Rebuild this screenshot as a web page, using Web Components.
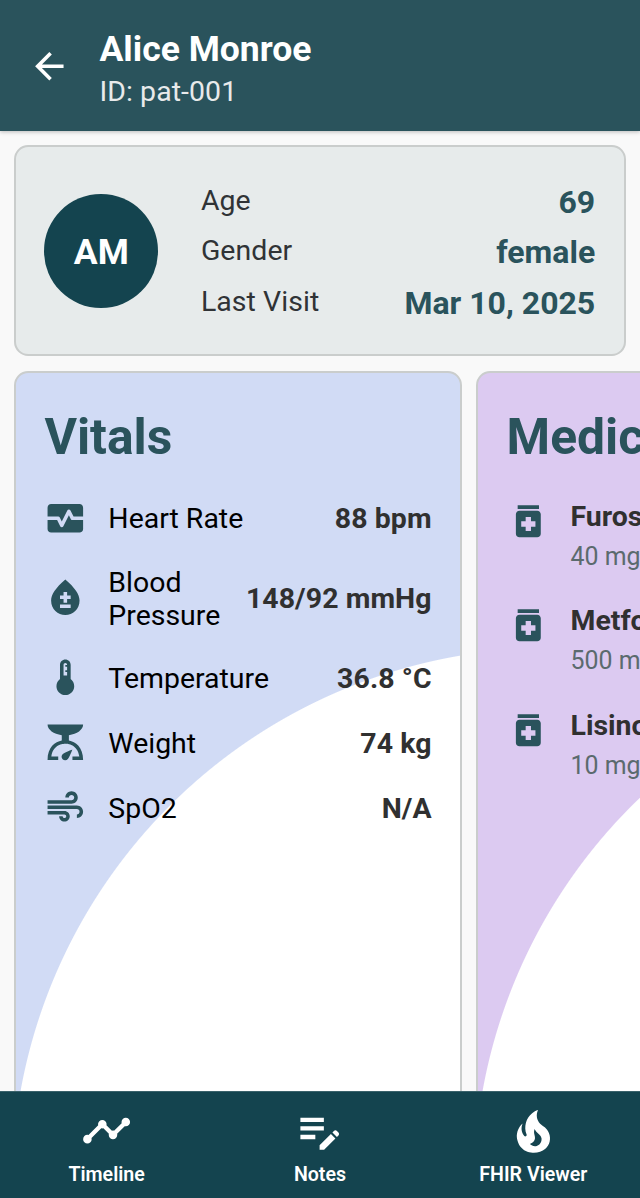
<!DOCTYPE html>
<html lang="en">
<head>
  <meta charset="utf-8">
  <meta name="viewport" content="width=device-width, initial-scale=1">
  <title>Alice Monroe</title>
  <style>
    html, body {
      height: 100%;
      margin: 0;
    }
    body {
      overflow: hidden;
      background: #f9f9f9;
      font-family: Roboto, sans-serif;
    }
  </style>
</head>
<body>
  <patient-screen>
    <app-header slot="header" heading="Alice Monroe">ID: pat-001</app-header>

    <patient-card initials="AM">
      <patient-fact label="Age">69</patient-fact>
      <patient-fact label="Gender">female</patient-fact>
      <patient-fact label="Last Visit">Mar 10, 2025</patient-fact>
    </patient-card>

    <card-carousel>
      <info-card heading="Vitals" style="--card-color: #d1dbf5">
        <vital-row icon="heart" label="Heart Rate">88 bpm</vital-row>
        <vital-row icon="blood" label="Blood Pressure">148/92 mmHg</vital-row>
        <vital-row icon="thermometer" label="Temperature">36.8 °C</vital-row>
        <vital-row icon="scale" label="Weight">74 kg</vital-row>
        <vital-row icon="air" label="SpO2">N/A</vital-row>
      </info-card>
      <info-card heading="Medications" style="--card-color: #dccaf1">
        <medication-row name="Furosemide">40 mg</medication-row>
        <medication-row name="Metformin">500 mg</medication-row>
        <medication-row name="Lisinopril">10 mg</medication-row>
      </info-card>
    </card-carousel>

    <nav-bar slot="footer">
      <nav-item icon="timeline">Timeline</nav-item>
      <nav-item icon="notes">Notes</nav-item>
      <nav-item icon="fire" size="56.9">FHIR Viewer</nav-item>
    </nav-bar>
  </patient-screen>

  <script>
    (function() {
      const icons = {
        back: 'M20 11H7.83l5.59-5.59L12 4l-8 8 8 8 1.41-1.41L7.83 13H20v-2z',
        heart: 'M15.11 12.45L14 10.24l-3.11 6.21c-.16.34-.51.55-.89.55s-.73-.21-.89-.55L7.38 13H2v5c0 1.1.9 2 2 2h16c1.1 0 2-.9 2-2v-5h-6c-.38 0-.73-.21-.89-.55zM20 4H4c-1.1 0-2 .9-2 2v5h6c.38 0 .73.21.89.55L10 13.76l3.11-6.21c.34-.68 1.45-.68 1.79 0L16.62 11H22V6c0-1.1-.9-2-2-2z',
        blood: 'M12 2c-5.33 4.55-8 8.48-8 11.8 0 4.98 3.8 8.2 8 8.2s8-3.22 8-8.2c0-3.32-2.67-7.25-8-11.8zm3 16H9v-2h6v2zm0-5h-2v2h-2v-2H9v-2h2V9h2v2h2v2z',
        thermometer: 'M15 13V5c0-1.66-1.34-3-3-3S9 3.34 9 5v8c-1.21.91-2 2.37-2 4 0 2.76 2.24 5 5 5s5-2.24 5-5c0-1.63-.79-3.09-2-4zm-4-8c0-.55.45-1 1-1s1 .45 1 1h-1v1h1v2h-1v1h1v2h-2V5z',
        scale: 'M14 11V8c4.56-.58 8-3.1 8-6H2c0 2.9 3.44 5.42 8 6v3c-3.68.73-8 3.61-8 11h6v-2H4.13c.93-6.83 6.65-7.2 7.87-7.2s6.94.37 7.87 7.2H16v2h6c0-7.39-4.32-10.27-8-11zM10.59 18.59C11.39 17.79 16 16 16 16s-1.79 4.61-2.59 5.41A2 2 0 1 1 10.59 18.59z',
        air: 'M14.5 17c0 1.65-1.35 3-3 3s-3-1.35-3-3h2c0 .55.45 1 1 1s1-.45 1-1-.45-1-1-1H2v-2h9.5c1.65 0 3 1.35 3 3zM19 6.5C19 4.57 17.43 3 15.5 3S12 4.57 12 6.5h2c0-.83.67-1.5 1.5-1.5s1.5.67 1.5 1.5S16.33 8 15.5 8H2v2h13.5c1.93 0 3.5-1.57 3.5-3.5zm-.5 4.5H2v2h16.5c.83 0 1.5.67 1.5 1.5s-.67 1.5-1.5 1.5v2c1.93 0 3.5-1.57 3.5-3.5S20.43 11 18.5 11z',
        medication: 'M6 3h12v2H6zm11 3H7c-1.1 0-2 .9-2 2v11c0 1.1.9 2 2 2h10c1.1 0 2-.9 2-2V8c0-1.1-.9-2-2-2zm-1 9h-2.5v2.5h-3V15H8v-3h2.5V9.5h3V12H16v3z',
        timeline: 'M3,14L3.5,14.07L8.07,9.5C7.89,8.85 8.06,8.11 8.59,7.59C9.37,6.8 10.63,6.8 11.41,7.59C11.94,8.11 12.11,8.85 11.93,9.5L14.5,12.07L15,12C15.18,12 15.35,12 15.5,12.07L19.07,8.5C19,8.35 19,8.18 19,8A2,2 0 0,1 21,6A2,2 0 0,1 23,8A2,2 0 0,1 21,10C20.82,10 20.65,10 20.5,9.93L16.93,13.5C17,13.65 17,13.82 17,14A2,2 0 0,1 15,16A2,2 0 0,1 13,14L13.07,13.5L10.5,10.93C10.18,11 9.82,11 9.5,10.93L4.93,15.5L5,16A2,2 0 0,1 3,18A2,2 0 0,1 1,16A2,2 0 0,1 3,14Z',
        notes: 'M3 10h11v2H3v-2zm0-2h11V6H3v2zm0 8h7v-2H3v2zm15.01-3.13.71-.71c.39-.39 1.02-.39 1.41 0l.71.71c.39.39.39 1.02 0 1.41l-.71.71-2.12-2.12zm-.71.71-5.3 5.3V21h2.12l5.3-5.3-2.12-2.12z',
        fire: 'M17.66 11.2C17.43 10.9 17.15 10.64 16.89 10.38C16.22 9.78 15.46 9.35 14.82 8.72C13.33 7.26 13 4.85 13.95 3C13 3.23 12.17 3.75 11.46 4.32C8.87 6.4 7.85 10.07 9.07 13.22C9.11 13.32 9.15 13.42 9.15 13.55C9.15 13.77 9 13.97 8.8 14.05C8.57 14.15 8.33 14.09 8.14 13.93C8.08 13.88 8.04 13.83 8 13.76C6.87 12.33 6.69 10.28 7.45 8.64C5.78 10 4.87 12.3 5 14.47C5.06 14.97 5.12 15.47 5.29 15.97C5.43 16.57 5.7 17.17 6 17.7C7.08 19.43 8.95 20.67 10.96 20.92C13.1 21.19 15.39 20.8 17.03 19.32C18.86 17.66 19.5 15 18.56 12.72L18.43 12.46C18.22 12 17.66 11.2 17.66 11.2M14.5 17.5C14.22 17.74 13.76 18 13.4 18.1C12.28 18.5 11.16 17.94 10.5 17.28C11.69 17 12.4 16.12 12.61 15.23C12.78 14.43 12.46 13.77 12.33 13C12.21 12.26 12.23 11.63 12.5 10.94C12.69 11.32 12.89 11.7 13.13 12C13.9 13 15.11 13.44 15.37 14.8C15.41 14.94 15.43 15.08 15.43 15.23C15.46 16.05 15.1 16.95 14.5 17.5Z'
      };

      // Registers an element whose shadow root is filled by render(element)
      function define(name, render) {
        window.customElements.define(name, class extends HTMLElement {
          constructor() {
            super();
            this.attachShadow({mode: 'open'});
          }

          connectedCallback() {
            this.shadowRoot.innerHTML = render(this);
          }
        });
      }

      define('ui-icon', (el) => `
        <style>
          :host {
            display: block;
            flex: none;
            width: var(--icon-size, 42.67px);
            height: var(--icon-size, 42.67px);
          }
          svg {
            display: block;
            width: 100%;
            height: 100%;
            fill: currentColor;
          }
        </style>
        <svg viewBox="0 0 24 24"><path d="${icons[el.getAttribute('name')]}"/></svg>
      `);

      define('patient-screen', () => `
        <style>
          :host {
            display: flex;
            flex-direction: column;
            height: 100vh;
            overflow: hidden;
          }
          main {
            flex: 1;
            min-height: 0;
            display: flex;
            flex-direction: column;
            gap: 15px;
            padding: 14px 14px 0;
            overflow: hidden;
          }
        </style>
        <slot name="header"></slot>
        <main><slot></slot></main>
        <slot name="footer"></slot>
      `);

      define('app-header', (el) => `
        <style>
          :host {
            position: relative;
            display: flex;
            align-items: center;
            flex: none;
            box-sizing: border-box;
            height: 131px;
            padding: 9px 28.4px 0;
            gap: 28.4px;
            background: #2a535c;
            color: #fff;
            box-shadow: 0 1px 4px rgba(0, 0, 0, .25);
          }
          h1 {
            margin: 0;
            font-size: 35.56px;
            font-weight: 700;
            line-height: 42px;
          }
          p {
            margin: 1px 0 0;
            color: #e8eaeb;
            font-size: 28.44px;
            line-height: 42px;
            letter-spacing: .08px;
          }
          ui-icon {
            margin-top: -8px;
          }
        </style>
        <ui-icon name="back"></ui-icon>
        <div>
          <h1>${el.getAttribute('heading')}</h1>
          <p><slot></slot></p>
        </div>
      `);

      define('patient-card', (el) => `
        <style>
          :host {
            display: flex;
            align-items: center;
            flex: none;
            box-sizing: border-box;
            height: 211px;
            padding: 0 28.8px 0 28.4px;
            gap: 42.7px;
            border: 2px solid #cacdcc;
            border-radius: 14.2px;
            background: #e7ebeb;
          }
          .avatar {
            display: flex;
            align-items: center;
            justify-content: center;
            flex: none;
            box-sizing: border-box;
            width: 113.8px;
            height: 113.8px;
            margin-top: 1px;
            padding-top: 3px;
            border-radius: 50%;
            background: #14444f;
            color: #fff;
            font-size: 35.56px;
            font-weight: 700;
          }
          .facts {
            flex: 1;
            padding-top: 16px;
          }
        </style>
        <div class="avatar">${el.getAttribute('initials')}</div>
        <div class="facts"><slot></slot></div>
      `);

      define('patient-fact', (el) => `
        <style>
          :host {
            display: flex;
            justify-content: space-between;
            align-items: flex-start;
            height: 50.3px;
          }
          .label {
            color: #303336;
            font-size: 28.44px;
            line-height: 36px;
            letter-spacing: .08px;
          }
          .value {
            color: #2a535c;
            font-size: 32px;
            font-weight: 700;
            line-height: 38.7px;
          }
        </style>
        <span class="label">${el.getAttribute('label')}</span>
        <span class="value"><slot></slot></span>
      `);

      define('card-carousel', () => `
        <style>
          :host {
            display: flex;
            flex: 1;
            gap: 14.2px;
            margin-right: -14px;
            overflow: hidden;
          }
        </style>
        <slot></slot>
      `);

      // The white disc is clipped by the card's right and bottom edges
      define('info-card', (el) => `
        <style>
          :host {
            flex: none;
            box-sizing: border-box;
            width: 448px;
            height: 860px;
            padding: 38px 28.4px 0;
            border: 2px solid #cacdcc;
            border-radius: 14.2px;
            background: radial-gradient(circle at 536.6px 815.6px, #fff 538.1px, var(--card-color) 539.1px) border-box;
          }
          h2 {
            margin: 0 0 22.5px;
            color: #2a535c;
            font-size: 49.8px;
            font-weight: 700;
            line-height: 52px;
          }
        </style>
        <h2>${el.getAttribute('heading')}</h2>
        <slot></slot>
      `);

      define('vital-row', (el) => `
        <style>
          :host {
            display: flex;
            align-items: center;
            box-sizing: border-box;
            min-height: 65px;
            padding: 13px 0;
            color: #000;
            font-size: 28.44px;
            line-height: 33.3px;
          }
          ui-icon {
            margin: -4px 21.3px -4px 0;
            color: #2a535c;
          }
          .label {
            flex: 1;
            padding-top: 2px;
          }
          .value {
            padding-top: 2px;
            color: #303030;
            font-weight: 700;
            letter-spacing: .08px;
            white-space: nowrap;
          }
        </style>
        <ui-icon name="${el.getAttribute('icon')}"></ui-icon>
        <span class="label">${el.getAttribute('label')}</span>
        <span class="value"><slot></slot></span>
      `);

      define('medication-row', (el) => `
        <style>
          :host {
            display: flex;
            align-items: flex-start;
            box-sizing: border-box;
            height: 104.5px;
            padding-top: 14px;
            gap: 21.3px;
            color: #303030;
            white-space: nowrap;
          }
          ui-icon {
            color: #2a535c;
          }
          strong {
            display: block;
            font-size: 28.44px;
            font-weight: 700;
            line-height: 33px;
          }
          small {
            display: block;
            margin-top: 9px;
            color: #5b6a6e;
            font-size: 24.9px;
            line-height: 30px;
          }
        </style>
        <ui-icon name="medication"></ui-icon>
        <div>
          <strong>${el.getAttribute('name')}</strong>
          <small><slot></slot></small>
        </div>
      `);

      define('nav-bar', () => `
        <style>
          :host {
            display: flex;
            flex: none;
            box-sizing: border-box;
            height: 107px;
            border-top: 1px solid #3a626b;
            background: #14444f;
            color: #fff;
          }
        </style>
        <slot></slot>
      `);

      define('nav-item', (el) => `
        <style>
          :host {
            display: flex;
            flex-direction: column;
            align-items: center;
            flex: 1 1 0;
            padding-top: 10px;
            --icon-size: ${el.getAttribute('size') || 51.2}px;
          }
          .icon {
            display: flex;
            align-items: center;
            height: 58px;
          }
          .label {
            margin-top: 3px;
            font-size: 19.6px;
            font-weight: 600;
            line-height: 24px;
          }
        </style>
        <div class="icon"><ui-icon name="${el.getAttribute('icon')}"></ui-icon></div>
        <span class="label"><slot></slot></span>
      `);
    })();
  </script>
</body>
</html>
